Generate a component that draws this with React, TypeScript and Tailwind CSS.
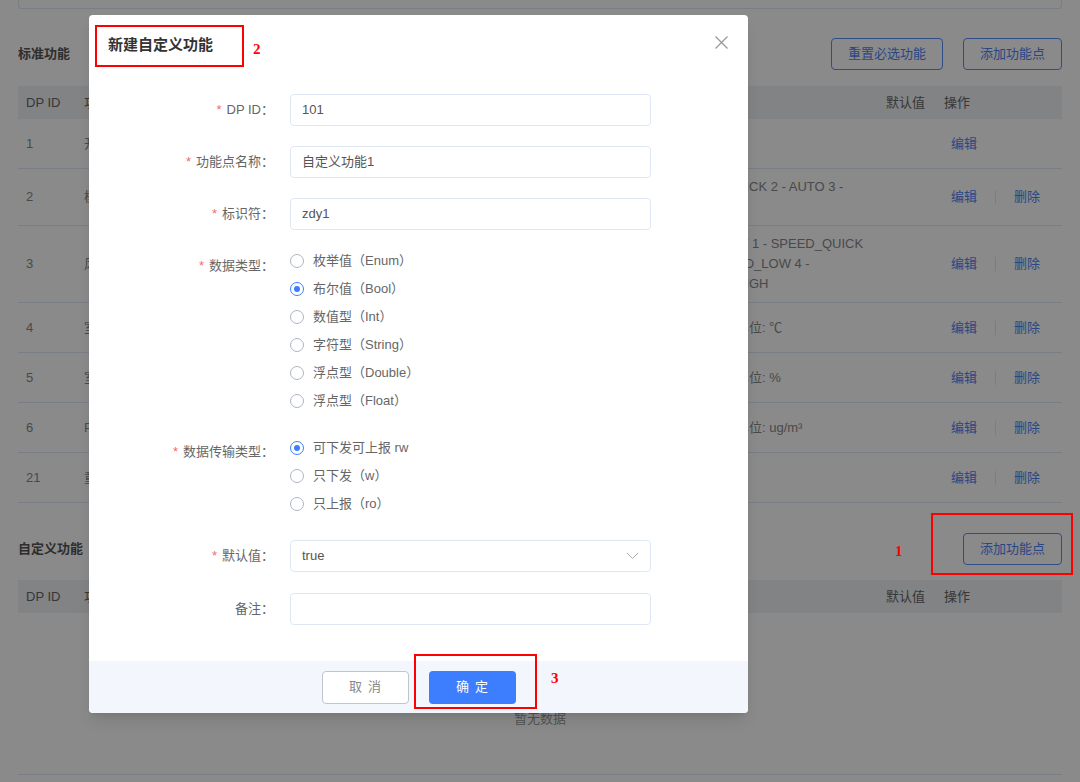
import React from "react";

const font = { fontFamily: '"Liberation Sans", "Noto Sans CJK SC", sans-serif' };

const rows = [
  { id: "1", name: "开关", desc: [""], del: false },
  { id: "2", name: "模式", desc: ["UICK 2 - AUTO 3 -", "S"], del: true },
  { id: "3", name: "风速", desc: ["W 1 - SPEED_QUICK", "ED_LOW 4 -", "HIGH"], del: true },
  { id: "4", name: "室内温度", desc: ["单位: ℃"], del: true },
  { id: "5", name: "室内湿度", desc: ["单位: %"], del: true },
  { id: "6", name: "PM2.5", desc: ["单位: ug/m³"], del: true },
  { id: "21", name: "童锁", desc: [""], del: true },
];

const TableHead = () => (
  <div className="grid grid-cols-[58px_1fr_142px_58px_126px] h-[33px] items-center bg-[#f0f2f6] text-[13px] text-[#666]">
    <div className="pl-2">DP ID</div>
    <div className="pl-2">功能点名称</div>
    <div></div>
    <div className="pl-2">默认值</div>
    <div className="pl-2">操作</div>
  </div>
);

const OutlineBtn = ({ children }: { children: React.ReactNode }) => (
  <button className="h-8 px-4 rounded-[4px] border border-[#5b8ff5] text-[13px] text-[#4f83f5] bg-white">
    {children}
  </button>
);

const Radio = ({ label, checked }: { label: string; checked?: boolean }) => (
  <div className="flex items-center h-7">
    <span
      className={
        checked
          ? "w-[14px] h-[14px] rounded-full border border-[#3d7eff] flex items-center justify-center"
          : "w-[14px] h-[14px] rounded-full border border-[#aeb6c4]"
      }
    >
      {checked && <span className="w-[6px] h-[6px] rounded-full bg-[#3d7eff]" />}
    </span>
    <span className="ml-[9px] text-[13px] text-[#666]">{label}</span>
  </div>
);

const Label = ({ text, req = true, extra = "" }: { text: string; req?: boolean; extra?: string }) => (
  <div className={"text-right text-[13px] text-[#666] leading-8 " + extra}>
    {req && <span className="text-[#f56c6c] mr-[5px]">*</span>}
    {text}：
  </div>
);

const Field = ({ value }: { value: string }) => (
  <div className="h-8 rounded-[4px] border border-[#dfe7f5] flex items-center pl-[11px] text-[13px] text-[#555]">
    {value}
  </div>
);

export default function App() {
  return (
    <div className="relative w-[1080px] h-[782px] overflow-hidden bg-white" style={font}>
      {/* page behind the dialog */}
      <div className="px-[18px]">
        <div className="h-[9px] border-x border-b border-[#dfe8f7] rounded-b-[4px]" />
        <div className="mt-[29px] flex items-center justify-between">
          <div className="text-[13px] font-bold text-[#555]">标准功能</div>
          <div className="flex gap-5">
            <OutlineBtn>重置必选功能</OutlineBtn>
            <OutlineBtn>添加功能点</OutlineBtn>
          </div>
        </div>
        <div className="mt-4">
          <TableHead />
          {rows.map((r) => (
            <div
              key={r.id}
              className="grid grid-cols-[58px_1fr_142px_58px_126px] min-h-[50px] items-center border-b border-[#dfe8f7] text-[13px] text-[#888]"
            >
              <div className="pl-2">{r.id}</div>
              <div className="pl-2">{r.name}</div>
              <div className="py-2 leading-5 whitespace-nowrap">
                {r.desc.map((l, i) => (
                  <div key={i}>{l}</div>
                ))}
              </div>
              <div></div>
              <div className="pl-[15px] flex items-center text-[#4f83f5]">
                <span>编辑</span>
                {r.del && (
                  <>
                    <span className="mx-[18px] w-px h-[14px] bg-[#dfe8f7]" />
                    <span>删除</span>
                  </>
                )}
              </div>
            </div>
          ))}
        </div>
        <div className="mt-[30px] flex items-center justify-between">
          <div className="text-[13px] font-bold text-[#555]">自定义功能</div>
          <OutlineBtn>添加功能点</OutlineBtn>
        </div>
        <div className="mt-[15px]">
          <TableHead />
          <div className="h-[162px] border-b border-[#dfe8f7] text-center text-[13px] text-[#999] pt-[96px]">
            暂无数据
          </div>
        </div>
      </div>

      {/* mask */}
      <div className="absolute inset-0 bg-black/[0.46]" />

      {/* dialog */}
      <div className="absolute left-[89px] top-[15px] w-[659px] h-[698px] bg-white rounded-[4px] shadow-lg flex flex-col">
        <div className="pt-5 px-[19px] flex items-center justify-between">
          <div className="text-[15px] font-bold text-[#333] leading-5">新建自定义功能</div>
          <svg width="13" height="13" viewBox="0 0 13 13" className="mr-[1px] -mt-[6px]">
            <path d="M0.5 0.5L12.5 12.5M12.5 0.5L0.5 12.5" stroke="#999" strokeWidth="1.3" />
          </svg>
        </div>
        <div className="mt-[39px] grid grid-cols-[185px_361px] gap-x-4">
          <Label text="DP ID" />
          <Field value="101" />
          <Label text="功能点名称" extra="mt-5" />
          <div className="mt-5">
            <Field value="自定义功能1" />
          </div>
          <Label text="标识符" extra="mt-5" />
          <div className="mt-5">
            <Field value="zdy1" />
          </div>
          <Label text="数据类型" extra="mt-[17px] pt-[3px]" />
          <div className="mt-[17px]">
            <Radio label="枚举值（Enum）" />
            <Radio label="布尔值（Bool）" checked />
            <Radio label="数值型（Int）" />
            <Radio label="字符型（String）" />
            <Radio label="浮点型（Double）" />
            <Radio label="浮点型（Float）" />
          </div>
          <Label text="数据传输类型" extra="mt-[19px] pt-[2px]" />
          <div className="mt-[19px]">
            <Radio label="可下发可上报 rw" checked />
            <Radio label="只下发（w）" />
            <Radio label="只上报（ro）" />
          </div>
          <Label text="默认值" extra="mt-[22px]" />
          <div className="mt-[22px] h-8 rounded-[4px] border border-[#dfe7f5] flex items-center justify-between pl-[11px] pr-[11px] text-[13px] text-[#555]">
            <span>true</span>
            <svg width="13" height="8" viewBox="0 0 13 8">
              <path d="M1 1L6.5 6.5L12 1" fill="none" stroke="#aaa" strokeWidth="1" />
            </svg>
          </div>
          <Label text="备注" req={false} extra="mt-[21px]" />
          <div className="mt-[21px]">
            <Field value="" />
          </div>
        </div>
        <div className="mt-auto h-[52px] bg-[#f3f6fc] rounded-b-[4px] flex items-center justify-center gap-5">
          <button className="w-[87px] h-[33px] rounded-[4px] border border-[#bfc5cf] bg-white text-[13px] text-[#888] tracking-[6px] pl-[6px]">
            取消
          </button>
          <button className="w-[87px] h-[33px] rounded-[4px] bg-[#3d7eff] text-[13px] text-white tracking-[6px] pl-[6px]">
            确定
          </button>
        </div>
      </div>

      {/* annotations */}
      <div className="absolute left-[95px] top-[25px] w-[149px] h-[42px] border-2 border-[#ff0000]" />
      <div className="absolute left-[253px] top-[38px] text-[15px] font-bold text-[#ff0000]" style={{ fontFamily: '"Liberation Serif", serif' }}>
        2
      </div>
      <div className="absolute left-[931px] top-[513px] w-[142px] h-[62px] border-2 border-[#ff0000]" />
      <div className="absolute left-[895px] top-[540px] text-[15px] font-bold text-[#ff0000]" style={{ fontFamily: '"Liberation Serif", serif' }}>
        1
      </div>
      <div className="absolute left-[414px] top-[654px] w-[123px] h-[55px] border-2 border-[#ff0000]" />
      <div className="absolute left-[551px] top-[667px] text-[15px] font-bold text-[#ff0000]" style={{ fontFamily: '"Liberation Serif", serif' }}>
        3
      </div>
    </div>
  );
}
